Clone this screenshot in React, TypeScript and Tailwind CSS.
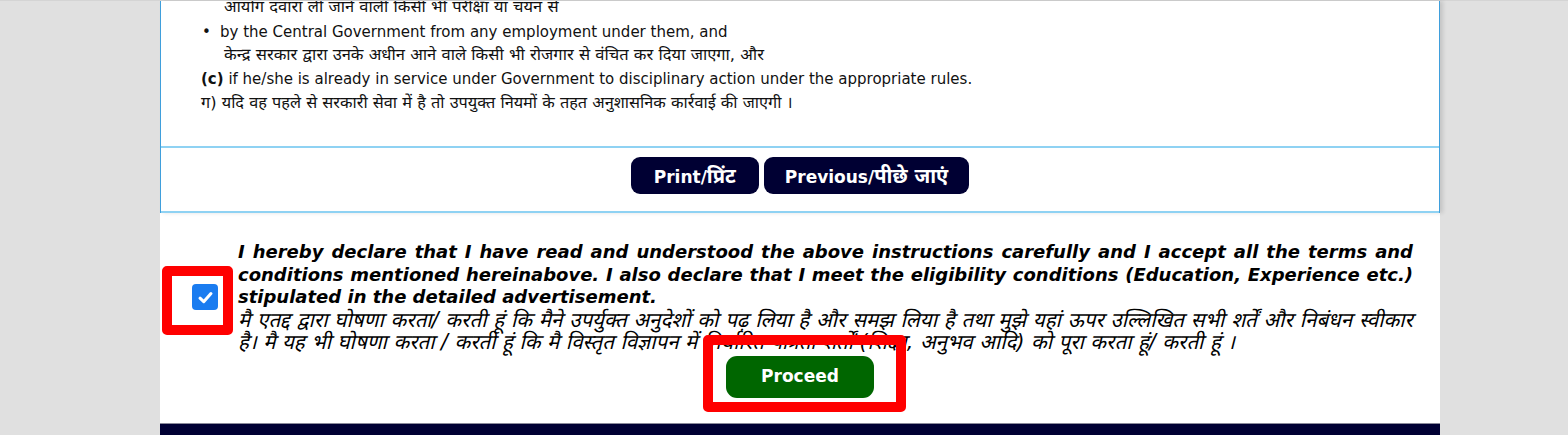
const latin = "font-['DejaVu_Sans','Noto_Sans_Devanagari','Lohit_Devanagari','FreeSans',sans-serif]"

function Checkbox() {
  return (
    <div className="flex h-[26px] w-[26px] shrink-0 items-center justify-center rounded-[4px] bg-[#1a7cf0]">
      <svg viewBox="0 0 16 16" className="h-[19px] w-[19px]" fill="none" stroke="white" strokeWidth="2.6" strokeLinecap="round" strokeLinejoin="round">
        <path d="M3.4 8.6 6.5 11.5 12.6 4.7" />
      </svg>
    </div>
  )
}

export default function App() {
  return (
    <div className={`min-h-[435px] border-t border-[#d4d4d4] bg-[#e0e0e0] ${latin}`}>
      <div className="relative ml-[160px] w-[1280px] bg-white">
        {/* instructions panel */}
        <div className="border-x border-[#3f9fdc] shadow-[3px_0_4px_rgba(0,0,0,0.12)]">
          <div className="overflow-hidden">
            <div className="-mt-[6px] pb-[31px] pl-[40px] text-[15px] leading-[24px] text-[#111]">
              <ul className="list-none">
                <li className="h-[24px] pl-[23px] text-[16.5px]">आयोग दवारा ली जाने वाली किसी भी परीक्षा या चयन से</li>
                <li className="flex h-[24px] pt-[1px]">
                  <span className="w-[19px] pl-[1px]">•</span>
                  <span>by the Central Government from any employment under them, and</span>
                </li>
                <li className="h-[24px] pl-[23px] text-[16.5px]">केन्द्र सरकार द्वारा उनके अधीन आने वाले किसी भी रोजगार से वंचित कर दिया जाएगा, और</li>
              </ul>
              <p className="h-[24px]">
                <b>(c)</b> if he/she is already in service under Government to disciplinary action under the appropriate rules.
              </p>
              <p className="h-[24px] text-[16.3px]">ग) यदि वह पहले से सरकारी सेवा में है तो उपयुक्त नियमों के तहत अनुशासनिक कार्रवाई की जाएगी ।</p>
            </div>
          </div>
          <div className="flex justify-center gap-[5px] border-y-2 border-[#8fd2f3] pb-[17px] pt-[9px]">
            <button type="button" className="h-[37px] rounded-[9px] bg-[#000033] px-[23px] text-[17px] font-bold text-white">
              Print/<span className="text-[20px]">प्रिंट</span>
            </button>
            <button type="button" className="h-[37px] rounded-[9px] bg-[#000033] px-[21px] text-[17px] font-bold text-white">
              Previous/<span className="text-[20px]">पीछे जाएं</span>
            </button>
          </div>
        </div>

        {/* declaration */}
        <div className="flex items-center pl-[32px] pr-[27px] pt-[28px]">
          <Checkbox />
          <div className="ml-[20px] text-justify italic text-black">
            <p className="text-[18px] font-bold leading-[22.5px]">
              I hereby declare that I have read and understood the above instructions carefully and I accept all the terms and conditions mentioned hereinabove. I also declare that I meet the eligibility conditions (Education, Experience etc.) stipulated in the detailed advertisement.
            </p>
            <p className="text-[20.5px] leading-[22.5px]">
              मै एतद्द द्वारा घोषणा करता/ करती हूं कि मैने उपर्युक्त अनुदेशों को पढ़ लिया है और समझ लिया है तथा मुझे यहां ऊपर उल्लिखित सभी शर्तें और निबंधन स्वीकार है। मै यह भी घोषणा करता / करती हूं कि मै विस्तृत विज्ञापन में निर्धारित पात्रता शर्तों (शिक्षा, अनुभव आदि) को पूरा करता हूं/ करती हूं ।
            </p>
          </div>
        </div>
        <div className="flex justify-center pb-[25px] pt-[2px]">
          <button type="button" className="h-[42px] w-[148px] rounded-[11px] bg-[#006600] text-[17px] font-bold text-white">
            Proceed
          </button>
        </div>
        <div className="h-[12px] border-t border-[#8a8a9a] bg-[#000033]" />

        {/* highlight overlays */}
        <div className="pointer-events-none absolute left-[2px] top-[265px] h-[69px] w-[71px] rounded-[5px] border-[10px] border-[#ff0000]" />
        <div className="pointer-events-none absolute left-[543px] top-[334px] h-[77px] w-[203px] rounded-[5px] border-[10px] border-[#ff0000]" />
      </div>
    </div>
  )
}
